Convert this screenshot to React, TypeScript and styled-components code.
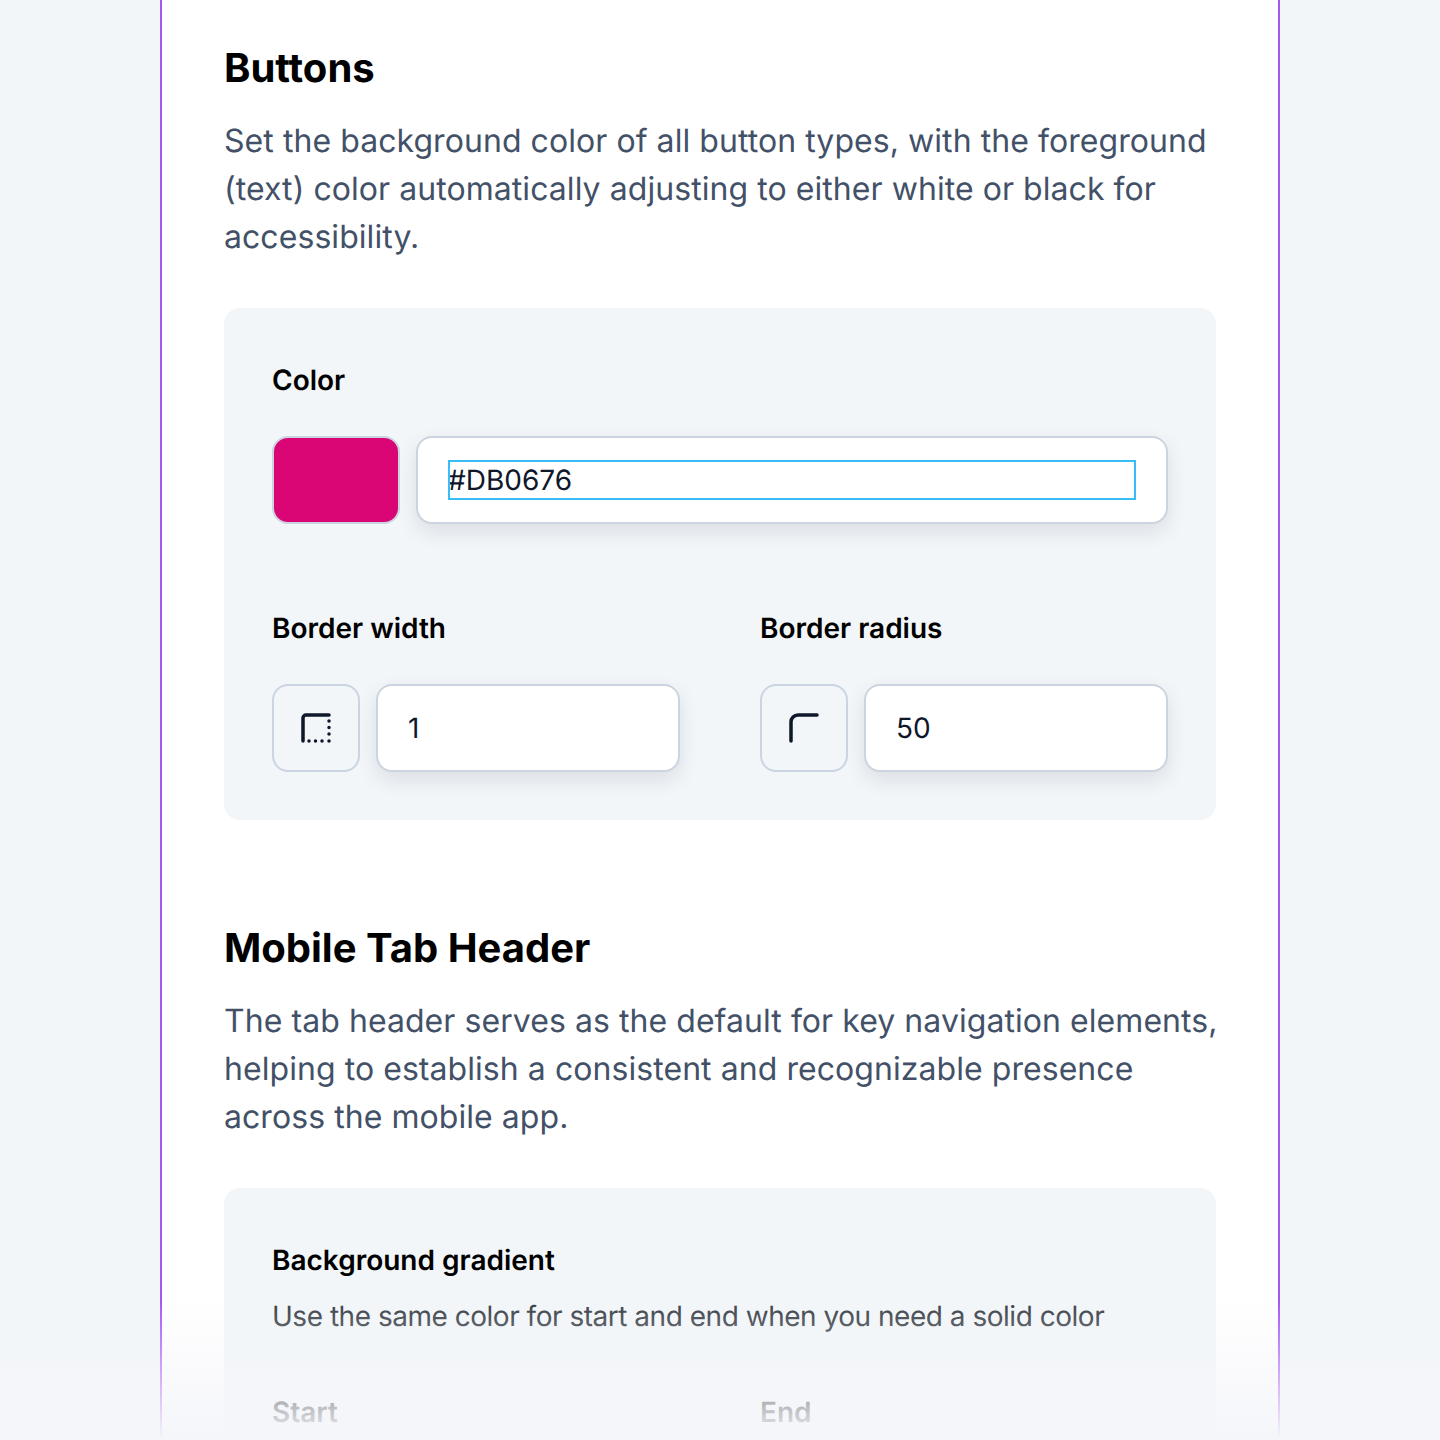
import React from 'react'
import styled, { createGlobalStyle } from 'styled-components'

const GlobalStyle = createGlobalStyle`
  * { box-sizing: border-box; }
  html, body { margin: 0; padding: 0; }
  body {
    background: #f2f6f9;
    font-family: Inter, "Liberation Sans", sans-serif;
    text-rendering: geometricPrecision;
    -webkit-font-smoothing: antialiased;
  }
`

const Page = styled.div`
  position: relative;
  height: 1440px;
  overflow: hidden;
`

const Sheet = styled.main`
  width: 1120px;
  margin: 0 auto;
  padding: 44px 62px 0;
  background: #fff;
  border-left: 2px solid #a855f7;
  border-right: 2px solid #a855f7;
  height: 1440px;
`

const Section = styled.section`
  & + & {
    margin-top: 104px;
  }
`

const Heading = styled.h2`
  margin: 0;
  font-size: 40px;
  line-height: 48px;
  font-weight: 700;
  color: #000;
`

const Lead = styled.p`
  margin: 25px -4px 47px 0;
  font-size: 32px;
  line-height: 48px;
  letter-spacing: 0.06px;
  color: #435168;
`

const Panel = styled.div`
  display: flex;
  flex-direction: column;
  gap: 80px;
  padding: 48px;
  border-radius: 16px;
  background: #f2f6f9;
`

const Columns = styled.div<{ $pull?: boolean }>`
  display: grid;
  grid-template-columns: 408px 408px;
  gap: 80px;
  ${p => p.$pull && 'margin-top: -32px;'}
`

const Field = styled.div`
  display: flex;
  flex-direction: column;
`

const Label = styled.div`
  font-size: 28px;
  line-height: 48px;
  font-weight: 600;
  color: #000;
`

const Hint = styled.div`
  margin-top: 8px;
  font-size: 28px;
  line-height: 48px;
  letter-spacing: -0.48px;
  color: #3a3f47;
`

const Controls = styled.div`
  display: flex;
  gap: 16px;
  margin-top: 32px;
`

const Swatch = styled.div<{ $color: string }>`
  flex: none;
  width: 128px;
  height: 88px;
  border: 2px solid #cbd5e1;
  border-radius: 16px;
  background: ${p => p.$color};
`

const IconBox = styled.div`
  flex: none;
  display: flex;
  align-items: center;
  justify-content: center;
  width: 88px;
  height: 88px;
  border: 2px solid #cbd5e1;
  border-radius: 16px;
  color: #0f172a;
`

const TextBox = styled.div`
  flex: 1;
  height: 88px;
  display: flex;
  align-items: center;
  padding: 0 30px;
  background: #fff;
  border: 2px solid #cbd5e1;
  border-radius: 16px;
  box-shadow: 0 8px 20px rgba(15, 23, 42, 0.1);
`

const Value = styled.div<{ $focused?: boolean }>`
  width: 100%;
  height: 40px;
  font-size: 28px;
  line-height: 40px;
  color: #0f172a;
  ${p => p.$focused && 'outline: 2px solid #38bdf8; outline-offset: -2px;'}
`

const Fade = styled.div`
  position: absolute;
  left: 0;
  right: 0;
  bottom: 0;
  height: 140px;
  background: linear-gradient(to bottom, rgba(245, 246, 250, 0), #f5f6fa 100%);
  pointer-events: none;
`

const BorderWidthIcon = () => (
  <svg width="32" height="32" viewBox="0 0 32 32" fill="none" stroke="currentColor" strokeLinecap="round" strokeWidth="3.5">
    <path d="M3 29V6a3 3 0 0 1 3-3h23" />
    <path d="M9 29h.01M15.5 29h.01M22 29h.01M29 29h.01M29 22h.01M29 15.500h.01M29 9h.01" />
  </svg>
)

const BorderRadiusIcon = () => (
  <svg width="32" height="32" viewBox="0 0 32 32" fill="none" stroke="currentColor" strokeLinecap="round" strokeWidth="3.5">
    <path d="M3 29V10a7 7 0 0 1 7-7h19" />
  </svg>
)

export default function App() {
  return (
    <Page>
      <GlobalStyle />
      <Sheet>
        <Section>
          <Heading>Buttons</Heading>
          <Lead>
            Set the background color of all button types, with the foreground (text) color automatically adjusting to
            either white or black for accessibility.
          </Lead>
          <Panel>
            <Field>
              <Label>Color</Label>
              <Controls>
                <Swatch $color="#db0676" />
                <TextBox>
                  <Value $focused>#DB0676</Value>
                </TextBox>
              </Controls>
            </Field>
            <Columns>
              <Field>
                <Label>Border width</Label>
                <Controls>
                  <IconBox>
                    <BorderWidthIcon />
                  </IconBox>
                  <TextBox>
                    <Value>1</Value>
                  </TextBox>
                </Controls>
              </Field>
              <Field>
                <Label>Border radius</Label>
                <Controls>
                  <IconBox>
                    <BorderRadiusIcon />
                  </IconBox>
                  <TextBox>
                    <Value>50</Value>
                  </TextBox>
                </Controls>
              </Field>
            </Columns>
          </Panel>
        </Section>
        <Section>
          <Heading>Mobile Tab Header</Heading>
          <Lead>
            The tab header serves as the default for key navigation elements, helping to establish a consistent and
            recognizable presence across the mobile app.
          </Lead>
          <Panel>
            <Field>
              <Label>Background gradient</Label>
              <Hint>Use the same color for start and end when you need a solid color</Hint>
            </Field>
            <Columns $pull>
              <Label>Start</Label>
              <Label>End</Label>
            </Columns>
          </Panel>
        </Section>
      </Sheet>
      <Fade />
    </Page>
  )
}
